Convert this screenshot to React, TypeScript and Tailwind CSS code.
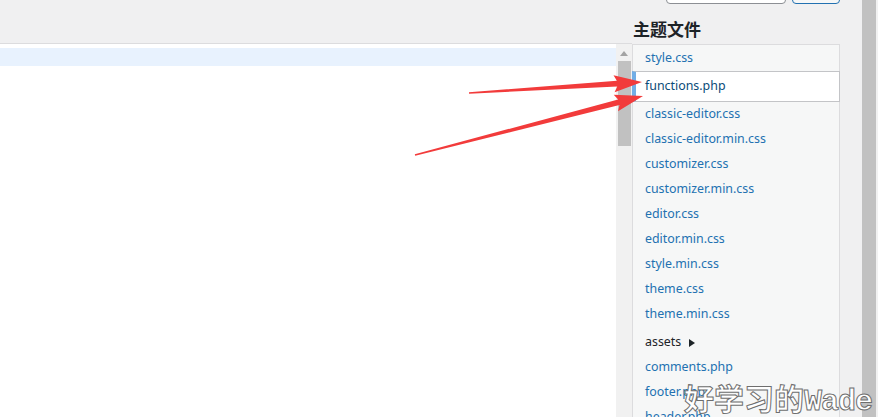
import React from "react";

const files = [
  "classic-editor.css",
  "classic-editor.min.css",
  "customizer.css",
  "customizer.min.css",
  "editor.css",
  "editor.min.css",
  "style.min.css",
  "theme.css",
  "theme.min.css",
];

const after = ["comments.php", "footer.php", "header.php"];

type Pt = [number, number];

// tapered annotation arrow: thin tail, wide head
function arrowPoints(tail: Pt, tip: Pt, headLen: number, headHalf: number, shaftHalf: number, tailHalf: number) {
  const dx = tip[0] - tail[0];
  const dy = tip[1] - tail[1];
  const len = Math.hypot(dx, dy);
  const ux = dx / len;
  const uy = dy / len;
  const nx = -uy;
  const ny = ux;
  const bx = tip[0] - ux * headLen;
  const by = tip[1] - uy * headLen;
  const pts: Pt[] = [
    [tail[0] + nx * tailHalf, tail[1] + ny * tailHalf],
    [bx + nx * shaftHalf, by + ny * shaftHalf],
    [bx - ux * 3 + nx * headHalf, by - uy * 3 + ny * headHalf],
    tip,
    [bx - ux * 3 - nx * headHalf, by - uy * 3 - ny * headHalf],
    [bx - nx * shaftHalf, by - ny * shaftHalf],
    [tail[0] - nx * tailHalf, tail[1] - ny * tailHalf],
  ];
  return pts.map((p) => p.join(",")).join(" ");
}

function Row({ name }: { name: string }) {
  return (
    <li className="h-[25px] flex items-center pl-[12px] text-[12.4px] text-[#2271b1] whitespace-nowrap">
      {name}
    </li>
  );
}

export default function App() {
  return (
    <div className="relative w-[878px] h-[417px] overflow-hidden bg-[#f0f0f1] flex font-['Noto_Sans','Noto_Sans_CJK_SC',sans-serif]">
      {/* editor column */}
      <div className="w-[632px] flex flex-col shrink-0">
        <div className="h-[44px] border-b border-[#dcdcde] shrink-0" />
        <div className="flex flex-1">
          <div className="flex-1 bg-white pt-[4px]">
            <div className="h-[18px] bg-[#e8f2fe]" />
          </div>
          <div className="w-[16px] bg-[#f1f1f1] flex flex-col items-center pt-[7px]">
            <svg width="8" height="5" viewBox="0 0 8 5">
              <path d="M0 5 L4 0 L8 5 Z" fill="#a3a3a3" />
            </svg>
            <div className="mt-[5px] w-[13px] h-[85px] bg-[#c1c1c1]" />
          </div>
        </div>
      </div>

      {/* file sidebar */}
      <div className="w-[208px] shrink-0 flex flex-col">
        <div className="flex justify-end gap-[6px] -mt-[26px]">
          <div className="w-[120px] h-[30px] border border-[#8c8f94] rounded-[4px] bg-white" />
          <div className="w-[48px] h-[30px] border border-[#2271b1] rounded-[4px] bg-[#f6f7f7]" />
        </div>
        <h2 className="mt-[10px] h-[30px] pl-[1px] text-[17px] font-bold text-[#1d2327] leading-[30px] font-['Noto_Sans_CJK_SC',sans-serif]">
          主题文件
        </h2>
        <ul className="flex-1 border border-[#dcdcde] bg-[#f6f7f7] pt-px">
          <Row name="style.css" />
          <li className="-ml-px -mr-px h-[31px] flex items-center pl-[9px] bg-white border border-[#c3c4c7] border-l-[4px] border-l-[#72aee6] text-[12.4px] text-[#0a4b78]">
            functions.php
          </li>
          {files.map((f) => (
            <Row key={f} name={f} />
          ))}
          <li className="mt-[3px] h-[25px] flex items-center gap-[8px] pl-[12px] text-[12.4px] text-[#1d2327]">
            assets
            <svg width="6" height="8" viewBox="0 0 6 8">
              <path d="M0 0 L6 4 L0 8 Z" fill="#1d2327" />
            </svg>
          </li>
          {after.map((f) => (
            <Row key={f} name={f} />
          ))}
        </ul>
      </div>

      {/* window scrollbar */}
      <div className="flex-1 flex justify-end">
        <div className="w-[14px] bg-[#c1c1c1]" />
        <div className="w-[2px] bg-[#f1f1f1]" />
      </div>

      {/* annotation arrows */}
      <svg className="absolute inset-0 pointer-events-none" width="878" height="417">
        <polygon points={arrowPoints([469, 93], [642, 82], 25, 8.5, 2.8, 0.8)} fill="#f23b3b" />
        <polygon points={arrowPoints([415, 155], [643, 96], 25, 8.5, 2.8, 0.8)} fill="#f23b3b" />
      </svg>

      {/* watermark */}
      <div className="absolute left-[684px] top-[379px] text-[30px] leading-[37px] whitespace-nowrap text-white font-bold [-webkit-text-stroke:1px_#6e6e6e]">
        <span className="font-['Noto_Sans_CJK_SC',sans-serif]">好学习的</span>
        <span className="font-['Liberation_Mono',monospace] tracking-[-1px]">Wade</span>
      </div>
    </div>
  );
}
